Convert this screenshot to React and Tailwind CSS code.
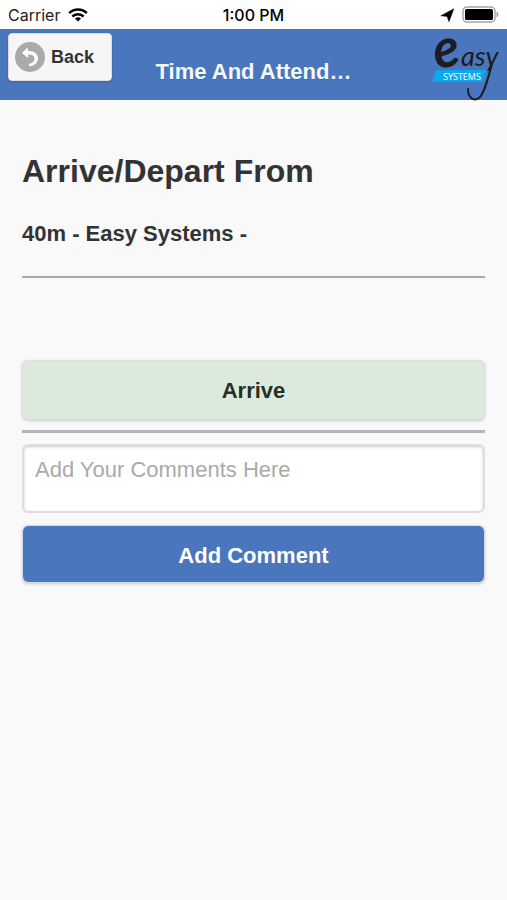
import React from "react";

function WifiIcon() {
  return (
    <svg viewBox="0 0 20 14" className="h-[14px] w-5" aria-hidden="true">
      <g fill="none" stroke="#000" strokeWidth="2.5">
        <path d="M1.2 5.2a12.6 12.6 0 0 1 17.6 0" />
        <path d="M4.4 8.5a8 8 0 0 1 11.2 0" />
      </g>
      <path d="M10 13.4 6.9 10.6a4.6 4.6 0 0 1 6.2 0Z" />
    </svg>
  );
}

function LocationIcon() {
  return (
    <svg viewBox="0 0 14 14" className="h-[14px] w-[14px]" aria-hidden="true">
      <path d="M13.8 .8 9 13.8 7 8.400 .8 7.800Z" stroke="#000" strokeWidth=".5" strokeLinejoin="round" />
    </svg>
  );
}

function BatteryIcon() {
  return (
    <svg viewBox="0 0 37 17" className="h-[17px] w-[37px]" aria-hidden="true">
      <rect x="1" y="1" width="32" height="15" rx="4" fill="#fff" stroke="#a5a5a5" strokeWidth="1.5" />
      <rect x="3" y="3" width="28" height="11" rx="1.5" />
      <path d="M34.5 5.5c2.4 1 2.4 5 0 6Z" fill="#999" />
    </svg>
  );
}

function BackIcon() {
  return (
    <svg viewBox="0 0 30 30" className="h-[30px] w-[30px]" aria-hidden="true">
      <circle cx="15" cy="15" r="15" fill="#aaa" />
      <path d="m7 11 5.500-5.500.6 3.500c6.500-.2 9.900 3 9.900 7.300 0 4.500-3.500 7.700-8.800 8l-.4-2.200c3.600-.6 5.700-2.600 5.700-5.300 0-2.800-2.200-4.200-6.500-4.200l.3 3.600Z" fill="#fff" />
    </svg>
  );
}

function Logo() {
  return (
    <svg viewBox="0 0 68 70" className="h-[70px] w-[68px] overflow-visible" role="img" aria-label="Easy Systems">
      <path d="M4 38H55L50 50H0Z" fill="#0aa9ee" />
      <text x="11" y="48" fill="#fff" fontSize="9" className="font-['Open_Sans',sans-serif]">
        SYSTEMS
      </text>
      <g fill="#1c1c22" className="font-['Lato',sans-serif] italic">
        <text x="4" y="37" fontSize="54" fontWeight="700" transform="rotate(-10 4 37)">
          e
        </text>
        <text x="29" y="34" fontSize="27">
          asy
        </text>
      </g>
      <path d="M60 32C56 46 53 60 47 66c-6 4-11-1-11-9" fill="none" stroke="#1c1c22" strokeWidth="2" strokeLinecap="round" />
    </svg>
  );
}

export default function App() {
  return (
    <div className="min-h-screen bg-[#f9f9f9] font-['Liberation_Sans',Arial,sans-serif] text-[#333]">
      <div className="grid h-[29px] grid-cols-3 items-center bg-white px-2 font-['Inter',sans-serif] text-base text-black">
        <div className="flex items-center gap-2 text-[#222]">
          <span>Carrier</span>
          <WifiIcon />
        </div>
        <span className="text-center font-medium">1:00 PM</span>
        <div className="flex items-center justify-end gap-2">
          <LocationIcon />
          <BatteryIcon />
        </div>
      </div>

      <header className="relative flex h-[71px] items-end justify-center bg-[#4a76bd] pb-3">
        <button
          type="button"
          className="absolute left-2 top-1 flex h-12 w-[104px] items-center gap-[6px] rounded border border-[#ddd] bg-[#f6f6f6] px-[6px] text-lg font-bold shadow-[0_1px_3px_rgba(0,0,0,0.15)]"
        >
          <BackIcon />
          Back
        </button>
        <h1 className="text-[22px] font-bold leading-8 text-[#f5f8ff] [text-shadow:0_1px_0_#3373a5]">Time And Attend…</h1>
        <div className="absolute right-[7px] top-[3px]">
          <Logo />
        </div>
      </header>

      <main className="px-[22px] pt-[50px]">
        <h2 className="text-[32px] font-bold leading-[42px]">Arrive/Depart From</h2>
        <h3 className="mt-7 text-[22px] font-bold leading-7">40m - Easy Systems -</h3>
        <hr className="mt-7 border-t-2 border-[#a9a9a9]" />
        <button
          type="button"
          className="mt-[82px] block h-[60px] w-full rounded-md border border-[#ddd] bg-[#dceadd] text-[22px] font-bold text-[#263026] shadow-[0_1px_3px_rgba(0,0,0,0.2)]"
        >
          Arrive
        </button>
        <hr className="mt-[10px] border-t-[3px] border-[#b3b8b3]" />
        <textarea
          aria-label="Comments"
          placeholder="Add Your Comments Here"
          className="mt-[11px] block h-[69px] w-full resize-none rounded-md border-2 border-[#ddd] bg-white px-[11px] py-2 text-[22px] leading-8 shadow-[inset_0_1px_3px_rgba(0,0,0,0.2)] outline-none placeholder:text-[#aaa]"
        />
        <button
          type="button"
          className="mt-3 block h-[58px] w-full rounded-md border border-[#d5dbe5] bg-[#4a76bd] bg-clip-padding pt-[2px] text-[22px] font-bold text-white shadow-[0_1px_3px_rgba(0,0,0,0.2)]"
        >
          Add Comment
        </button>
      </main>
    </div>
  );
}
